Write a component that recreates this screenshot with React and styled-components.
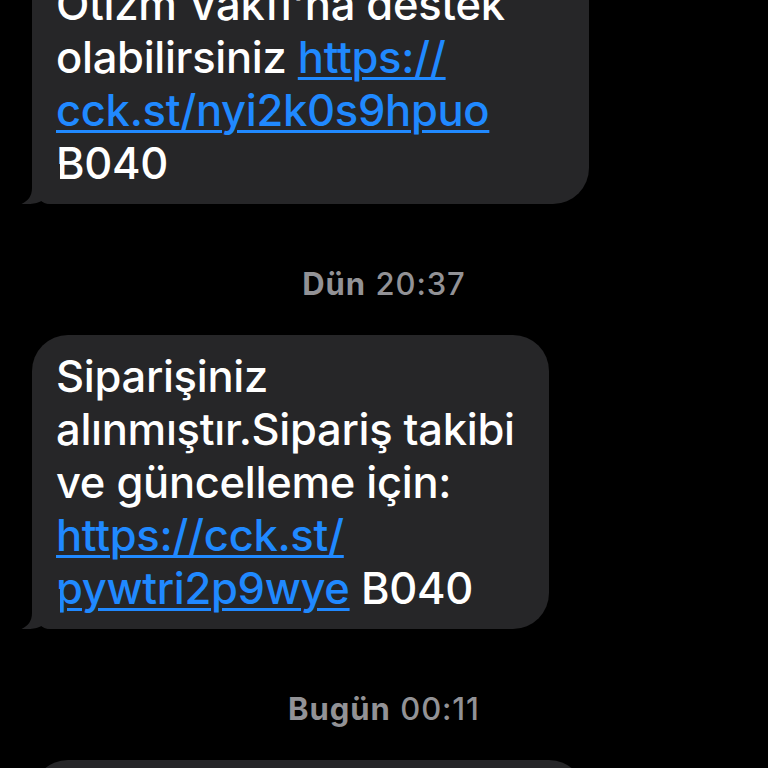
import React from "react";
import styled, { createGlobalStyle } from "styled-components";

const Global = createGlobalStyle`
  html, body {
    margin: 0;
    padding: 0;
    background: #000;
    overflow: hidden;
  }
  #root {
    width: 768px;
    height: 768px;
    overflow: hidden;
    background: #000;
  }
`;

const Thread = styled.div`
  display: flex;
  flex-direction: column;
  align-items: flex-start;
  padding-left: 32px;
  margin-top: -90px;
  font-family: Inter, "Liberation Sans", Arial, sans-serif;
`;

const BubbleWrap = styled.div`
  position: relative;
  width: ${(p) => p.$width}px;
  box-sizing: border-box;
  background: #262628;
  border-radius: 36px;
  border-bottom-left-radius: 20px;
  padding: ${(p) => (p.$clipped ? 68 : 15)}px 24px 14px 24px;
  min-height: ${(p) => p.$minHeight || 0}px;
  color: #fff;
  font-size: 43.5px;
  font-weight: 500;
  line-height: 53px;
  letter-spacing: -0.3px;
  white-space: nowrap;
`;

const TailSvg = styled.svg`
  position: absolute;
  left: -12px;
  bottom: 0;
  width: 40px;
  height: 40px;
  display: block;
`;

const Link = styled.span`
  color: #2089ff;
  text-decoration: underline;
  text-decoration-thickness: 3px;
  text-underline-offset: 4px;
`;

const Stamp = styled.div`
  align-self: stretch;
  margin: 62px 0 33px -32px;
  text-align: center;
  color: #929296;
  font-size: 31px;
  line-height: 36px;
  letter-spacing: 0.9px;
`;

const Day = styled.span`
  font-weight: 700;
`;

const Time = styled.span`
  font-weight: 500;
`;

const Tail = () => (
  <TailSvg viewBox="0 0 40 40" aria-hidden="true">
    <path
      d="M12 0 H40 V40 H30 C26 40 23.5 38.8 21.5 37 C17 39.6 10 40.6 1.5 40 C8 37 12 32 12 24 Z"
      fill="#262628"
    />
  </TailSvg>
);

const Bubble = ({ width, clipped, minHeight, children }) => (
  <BubbleWrap $width={width} $clipped={clipped} $minHeight={minHeight}>
    {children}
    <Tail />
  </BubbleWrap>
);

export default function App() {
  return (
    <>
      <Global />
      <Thread>
        <Bubble width={557} clipped>
          Otizm Vakfı'na destek
          <br />
          olabilirsiniz <Link>https://</Link>
          <br />
          <Link>cck.st/nyi2k0s9hpuo</Link>
          <br />
          B040
        </Bubble>

        <Stamp>
          <Day>Dün</Day> <Time>20:37</Time>
        </Stamp>

        <Bubble width={517}>
          Siparişiniz
          <br />
          alınmıştır.Sipariş takibi
          <br />
          ve güncelleme için:
          <br />
          <Link>https://cck.st/</Link>
          <br />
          <Link>pywtri2p9wye</Link> B040
        </Bubble>

        <Stamp>
          <Day>Bugün</Day> <Time>00:11</Time>
        </Stamp>

        <Bubble width={553} minHeight={120} />
      </Thread>
    </>
  );
}
